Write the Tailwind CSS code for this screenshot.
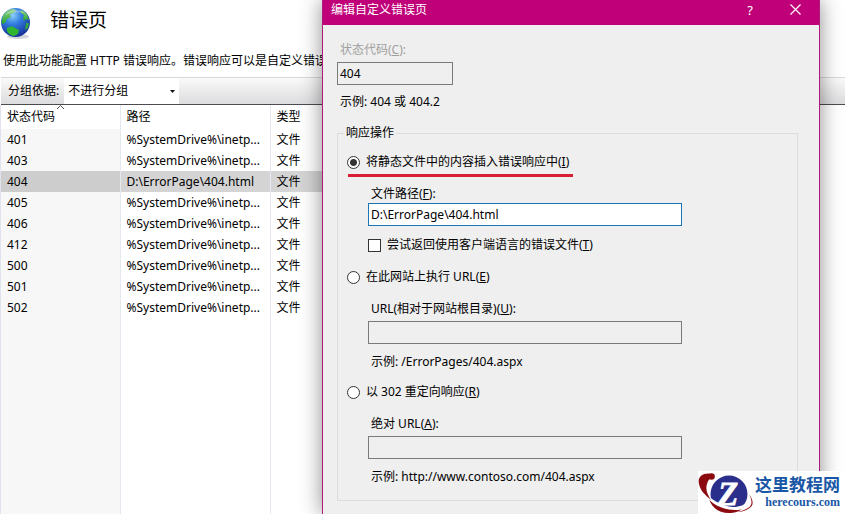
<!DOCTYPE html>
<html lang="zh-CN">
<head>
    <meta charset="UTF-8">
    <meta name="viewport" content="width=device-width, initial-scale=1.0">
    <title>错误页</title>
    <script src="https://cdn.jsdelivr.net/npm/@tailwindcss/browser@4"></script>
</head>
<body class="relative flex h-screen flex-col overflow-hidden bg-white font-['Noto_Sans','Noto_Sans_CJK_SC',sans-serif] text-[12px] leading-4 text-black">

    <header class="flex h-10 items-center gap-[18px]">
        <svg class="mt-2 size-8 shrink-0" viewBox="0 0 32 32" aria-hidden="true">
            <defs>
                <radialGradient id="sea" cx="0.4" cy="0.25" r="0.75">
                    <stop offset="0" stop-color="#8fd0f8"/>
                    <stop offset="0.4" stop-color="#3480e0"/>
                    <stop offset="1" stop-color="#16319a"/>
                </radialGradient>
                <linearGradient id="land" x1="0" y1="0" x2="0" y2="1">
                    <stop offset="0" stop-color="#8fd08a"/>
                    <stop offset="1" stop-color="#23a52c"/>
                </linearGradient>
            </defs>
            <ellipse cx="18" cy="28.5" rx="11" ry="2.5" fill="#d3d5da"/>
            <circle cx="15.5" cy="14.500" r="14.500" fill="url(#sea)"/>
            <path d="M3 8C5 4 9 1 13 1l3 1-2 3-4 1 1 3-4 2-2 4-3 1c-1-3 0-5 1-7z" fill="url(#land)"/>
            <path d="M20 2c4 1 7 3 8 7l1 3-3-1-2 2-1-3 1-3-3-2z" fill="url(#land)"/>
            <path d="M7 20c3-2 6-2 8 0l4 2-1 4-4 2c-4 0-8-4-7-8z" fill="#2fb52f"/>
            <path d="M26 15l3 0-1 5-3 2z" fill="#2fa640"/>
            <path d="M5 7C9 2 18 0 24 5c-5-1-13 0-19 2z" fill="#ffffff" opacity="0.25"/>
        </svg>
        <h1 class="text-[19px] leading-10">错误页</h1>
    </header>
    <p class="mt-[13px] ml-[3px] whitespace-nowrap">使用此功能配置 HTTP 错误响应。错误响应可以是自定义错误</p>

    <div class="mt-2 ml-px flex h-7 shrink-0 items-stretch border-t border-b border-t-[#d9d9dc] border-b-[#4b4b50] bg-linear-to-b from-[#fafafa] to-[#dcdcde]">
        <label for="group" class="flex items-center pl-[7px]">分组依据:</label>
        <div class="relative ml-[5px] w-[115px]">
            <select id="group" class="h-full w-full appearance-none bg-white pl-1 outline-none">
                <option>不进行分组</option>
            </select>
            <svg class="pointer-events-none absolute top-3 right-1 h-[3px] w-[5px]" viewBox="0 0 5 3"><path d="M0 0h5L2.500 3z" fill="#111"/></svg>
        </div>
    </div>

    <main class="flex-1 border-l border-[#dfe3ec]">
        <table class="h-full w-[480px] table-fixed border-collapse text-left">
            <thead>
                <tr class="h-6 [&>th]:border-r [&>th]:border-[#e4e9f0] [&>th]:px-[6px] [&>th]:font-normal">
                    <th class="relative w-[119px]">状态代码
                        <svg class="absolute top-0 left-14 h-1 w-[7px]" viewBox="0 0 7 4"><path d="M0 4l3.500-3.500L7 4" fill="none" stroke="#555"/></svg>
                    </th>
                    <th class="w-[150px]">路径</th>
                    <th>类型</th>
                </tr>
            </thead>
            <tbody id="rows" class="[&_td]:overflow-hidden [&_td]:border-r [&_td]:border-[#e4e9f0] [&_td]:px-[6px] [&_td]:text-nowrap"></tbody>
        </table>
    </main>

    <section role="dialog" aria-labelledby="dialogTitle" class="absolute inset-y-0 right-[25px] left-[322px] border-x border-[#b0187c] bg-[#efefef] shadow-[0_0_20px_rgba(0,0,0,0.45)]">
        <div class="flex h-[25px] items-start bg-[#c00078] pt-0.5 pr-[18px] pl-2 text-white">
            <h2 id="dialogTitle" class="flex-1">编辑自定义错误页</h2>
            <button type="button" aria-label="帮助" class="mr-[34px] h-4 w-3 text-[13px]">?</button>
            <button type="button" aria-label="关闭" class="mt-0.5">
                <svg class="size-[11px]" viewBox="0 0 11 11"><path d="M.5.5l10 10M10.500.5l-10 10" stroke="#fff" stroke-width="1.200"/></svg>
            </button>
        </div>

        <form class="px-[14px] pt-[17px]">
            <label for="code" class="ml-[3px] block text-[#a0a0a0]">状态代码(<u>C</u>):</label>
            <input id="code" type="text" value="404" readonly class="mt-1 block h-[23px] w-[116px] border border-[#7a7a7a] bg-[#efefef] px-0.5 outline-none">
            <p class="mt-[9px] ml-[3px]">示例: 404 或 404.2</p>

            <fieldset class="mt-[15px] mr-[7px] border border-[#dcdcdc] pb-[15px] pl-[9px]">
                <legend class="-ml-[3px] px-0.5">响应操作</legend>

                <label class="mt-[13px] flex items-center gap-[6px]">
                    <input type="radio" name="action" checked class="size-[13px] appearance-none rounded-full border border-[#333] bg-white checked:bg-[radial-gradient(circle,#333_3px,#fff_4px)]">
                    <span>将静态文件中的内容插入错误响应中(<u>I</u>)</span>
                </label>
                <div class="mt-1 ml-px h-[3px] w-[225px] bg-[#d81f35]"></div>
                <div class="ml-[21px]">
                    <label for="path" class="mt-[9px] ml-[3px] block">文件路径(<u>F</u>):</label>
                    <input id="path" type="text" value="D:\ErrorPage\404.html" class="mt-px block h-[23px] w-[314px] border border-[#1a74b8] bg-white px-0.5 outline-none">
                    <label class="mt-[11px] flex items-center gap-[6px]">
                        <input type="checkbox" class="size-[13px] appearance-none border border-[#333] bg-white">
                        <span>尝试返回使用客户端语言的错误文件(<u>T</u>)</span>
                    </label>
                </div>

                <label class="mt-4 flex items-center gap-[6px]">
                    <input type="radio" name="action" class="size-[13px] appearance-none rounded-full border border-[#333] bg-white checked:bg-[radial-gradient(circle,#333_3px,#fff_4px)]">
                    <span>在此网站上执行 URL(<u>E</u>)</span>
                </label>
                <div class="ml-[21px]">
                    <label for="url" class="mt-4 ml-[3px] block">URL(相对于网站根目录)(<u>U</u>):</label>
                    <input id="url" type="text" readonly class="mt-1 block h-[23px] w-[314px] border border-[#7a7a7a] bg-[#efefef] px-0.5 outline-none">
                    <p class="mt-[10px] ml-[3px]">示例: /ErrorPages/404.aspx</p>
                </div>

                <label class="mt-[14px] flex items-center gap-[6px]">
                    <input type="radio" name="action" class="size-[13px] appearance-none rounded-full border border-[#333] bg-white checked:bg-[radial-gradient(circle,#333_3px,#fff_4px)]">
                    <span>以 302 重定向响应(<u>R</u>)</span>
                </label>
                <div class="ml-[21px]">
                    <label for="absolute" class="mt-4 ml-[3px] block">绝对 URL(<u>A</u>):</label>
                    <input id="absolute" type="text" readonly class="mt-1 block h-[23px] w-[314px] border border-[#7a7a7a] bg-[#efefef] px-0.5 outline-none">
                    <p class="mt-[10px] ml-[3px]">示例: http://www.contoso.com/404.aspx</p>
                </div>
            </fieldset>
        </form>
    </section>

    <!-- site badge -->
    <div class="absolute right-0 bottom-0 flex h-[43px] w-[147px] items-center bg-white">
        <svg class="h-[43px] w-[57px] shrink-0" viewBox="0 0 57 43" aria-hidden="true">
            <circle cx="31" cy="23" r="18.500" fill="#2b2f8c"/>
            <path d="M11 28c6 7 15 10 27 10 3 0 5 0 7-1-4 4-9 5-14 5-10 0-17-5-20-14z" fill="#8b0a10"/>
            <path d="M4 18c8 11 20 17 31 18 7 0 12-2 15-7l1 2c0 6-6 8-14 8C23 39 9 31 4 18z" fill="#fff"/>
            <path d="M14 3C6 1-1 5 1 13c1 6 6 11 12 16-3-5-6-10-4-16 1-4 3-6 6-7z" fill="#8b0a10"/>
            <circle cx="13.500" cy="5.500" r="3.300" fill="#8b0a10"/>
            <path d="M51 23c5 7 5 12-1 15-3 2-7 3-11 3 4-1 8-2 11-4 5-3 4-8 1-14z" fill="#8b0a10"/>
            <text x="20" y="34" font-family="Liberation Serif, serif" font-size="33" font-weight="700" font-style="italic" fill="#fff" stroke="#fff" stroke-width="0.8">Z</text>
        </svg>
        <div class="flex-1 pr-[6px] text-right font-bold whitespace-nowrap text-[#1957a6]">
            <p class="font-['Noto_Sans_CJK_SC',sans-serif] text-[17px] leading-[18px]">这里教程网</p>
            <p class="font-['Liberation_Serif',serif] text-[12px] leading-[18px]">herecours.com</p>
        </div>
    </div>

    <script>
        const codes = ["401", "403", "404", "405", "406", "412", "500", "501", "502"];
        const rows = codes.map(code => {
            const selected = code === "404";
            const path = selected ? "D:\\ErrorPage\\404.html" : "%SystemDrive%\\inetp...";
            return `<tr class="h-[21px] ${selected ? "bg-[#d4d4d4]" : ""}">
                <td class="${selected ? "bg-[#cdcdcd]" : "bg-[#f7f7f7]"}">${code}</td>
                <td>${path}</td>
                <td>文件</td>
            </tr>`;
        });
        // empty row keeps the column lines running to the bottom
        rows.push(`<tr class="h-full"><td class="bg-[#f7f7f7]"></td><td></td><td></td></tr>`);
        document.getElementById("rows").innerHTML = rows.join("");
    </script>

</body>
</html>
